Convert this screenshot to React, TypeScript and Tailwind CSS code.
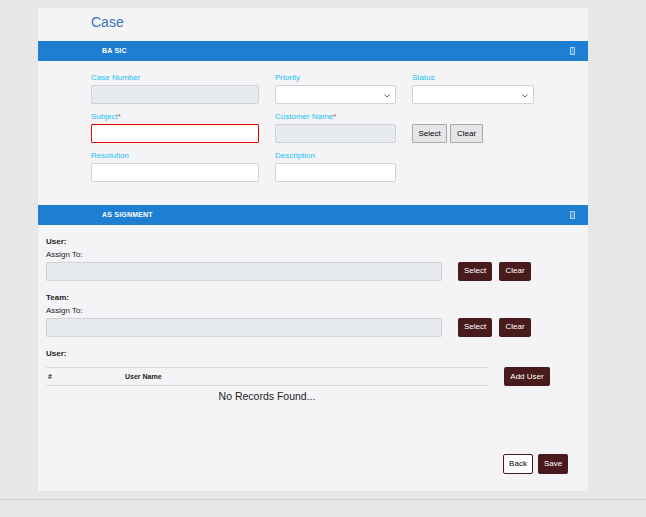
import React from "react";

const Chevron = () => (
  <svg width="6" height="4" viewBox="0 0 6 4" className="absolute right-[5px] top-[8px]">
    <path d="M0.5 0.5 L3 3 L5.5 0.5" fill="none" stroke="#555" strokeWidth="0.9" />
  </svg>
);

const Label = ({ children, req }: { children: React.ReactNode; req?: boolean }) => (
  <div className="text-[8px] leading-[10px] text-[#22bff5] h-[10px] mb-[2px]">
    {children}
    {req && <span className="text-[#e53935]">*</span>}
  </div>
);

const Header = ({ title, pl }: { title: string; pl: string }) => (
  <div className={`h-[20px] bg-[#1e7ed2] flex items-center justify-between pr-[13px] ${pl}`}>
    <span className="text-white font-bold text-[7px] tracking-[0.2px]">{title}</span>
    <span className="w-[5px] h-[8px] border border-[#a8cff2] bg-[#4a97dc] inline-block" />
  </div>
);

const DarkBtn = ({ children, w }: { children: React.ReactNode; w: string }) => (
  <button className={`${w} h-[19px] bg-[#4a1b1d] text-white text-[8px] rounded-[2px] flex items-center justify-center`}>
    {children}
  </button>
);

export default function App() {
  return (
    <div
      className="min-h-[517px] bg-[#e6e7e6] pt-[8px]"
      style={{ fontFamily: '"Liberation Sans", Arial, sans-serif' }}
    >
      <div className="ml-[38px] w-[550px] h-[483px] bg-[#f4f4f6] flex flex-col">
        <div className="h-[33px] pl-[53px] pt-[6px]">
          <div className="text-[14px] leading-[16px] text-[#3a73b8]">Case</div>
        </div>
        <Header title="BA SIC" pl="pl-[64px]" />
        <div className="pl-[53px] pt-[12px] pb-[23px]">
          <div className="grid grid-cols-[168px_121px_122px] gap-x-[16px] gap-y-[8px]">
            <div>
              <Label>Case Number</Label>
              <div className="h-[19px] bg-[#e8ebee] border border-[#cfd2d6] rounded-[2px]" />
            </div>
            <div>
              <Label>Priority</Label>
              <div className="relative h-[19px] bg-white border border-[#cfd2d6] rounded-[2px]">
                <Chevron />
              </div>
            </div>
            <div>
              <Label>Status</Label>
              <div className="relative h-[19px] bg-white border border-[#cfd2d6] rounded-[2px]">
                <Chevron />
              </div>
            </div>
            <div>
              <Label req>Subject</Label>
              <div className="h-[19px] bg-white border border-[#ee0000] rounded-[1px]" />
            </div>
            <div>
              <Label req>Customer Name</Label>
              <div className="h-[19px] bg-[#e8ebee] border border-[#cfd2d6] rounded-[2px]" />
            </div>
            <div className="flex items-end gap-[3px]">
              <button className="w-[35px] h-[19px] bg-[#e6e6e8] border border-[#a9a9a9] text-[8px] text-black rounded-[1px]">
                Select
              </button>
              <button className="w-[33px] h-[19px] bg-[#e6e6e8] border border-[#a9a9a9] text-[8px] text-black rounded-[1px]">
                Clear
              </button>
            </div>
            <div>
              <Label>Resolution</Label>
              <div className="h-[19px] bg-white border border-[#cfd2d6] rounded-[2px]" />
            </div>
            <div>
              <Label>Description</Label>
              <div className="h-[19px] bg-white border border-[#cfd2d6] rounded-[2px]" />
            </div>
            <div />
          </div>
        </div>
        <Header title="AS SIGNMENT" pl="pl-[64px]" />
        <div className="flex-1 flex flex-col pl-[8px] pt-[12px] pr-[20px] pb-[17px] text-[8px] leading-[10px] text-[#222]">
          <div className="font-bold">User:</div>
          <div className="mt-[3px]">Assign To:</div>
          <div className="flex items-center mt-[2px]">
            <div className="w-[396px] h-[19px] bg-[#e8ebee] border border-[#cfd2d6] rounded-[2px]" />
            <div className="ml-[16px] flex gap-[7px] -mt-[1px]">
              <DarkBtn w="w-[34px]">Select</DarkBtn>
              <DarkBtn w="w-[32px]">Clear</DarkBtn>
            </div>
          </div>
          <div className="font-bold mt-[12px]">Team:</div>
          <div className="mt-[3px]">Assign To:</div>
          <div className="flex items-center mt-[2px]">
            <div className="w-[396px] h-[19px] bg-[#e8ebee] border border-[#cfd2d6] rounded-[2px]" />
            <div className="ml-[16px] flex gap-[7px] -mt-[1px]">
              <DarkBtn w="w-[34px]">Select</DarkBtn>
              <DarkBtn w="w-[32px]">Clear</DarkBtn>
            </div>
          </div>
          <div className="font-bold mt-[12px]">User:</div>
          <div className="flex mt-[8px]">
            <div className="w-[442px]">
              <div className="h-[19px] border-t border-b border-[#dcdcdf] flex items-center font-bold text-[7px]">
                <span className="w-[79px] pl-[2px]">#</span>
                <span>User Name</span>
              </div>
              <div className="text-center text-[10.5px] leading-[20px] text-[#222]">No Records Found...</div>
            </div>
            <div className="ml-[16px]">
              <DarkBtn w="w-[46px]">Add User</DarkBtn>
            </div>
          </div>
          <div className="flex-1" />
          <div className="flex justify-end gap-[5px]">
            <button className="w-[30px] h-[20px] bg-white border border-[#4a1b1d] text-[8px] text-black rounded-[2px]">
              Back
            </button>
            <DarkBtn w="w-[30px] !h-[20px]">Save</DarkBtn>
          </div>
        </div>
      </div>
      <div className="mt-[8px] border-t border-[#d0d1d0] h-[17px]" />
    </div>
  );
}
